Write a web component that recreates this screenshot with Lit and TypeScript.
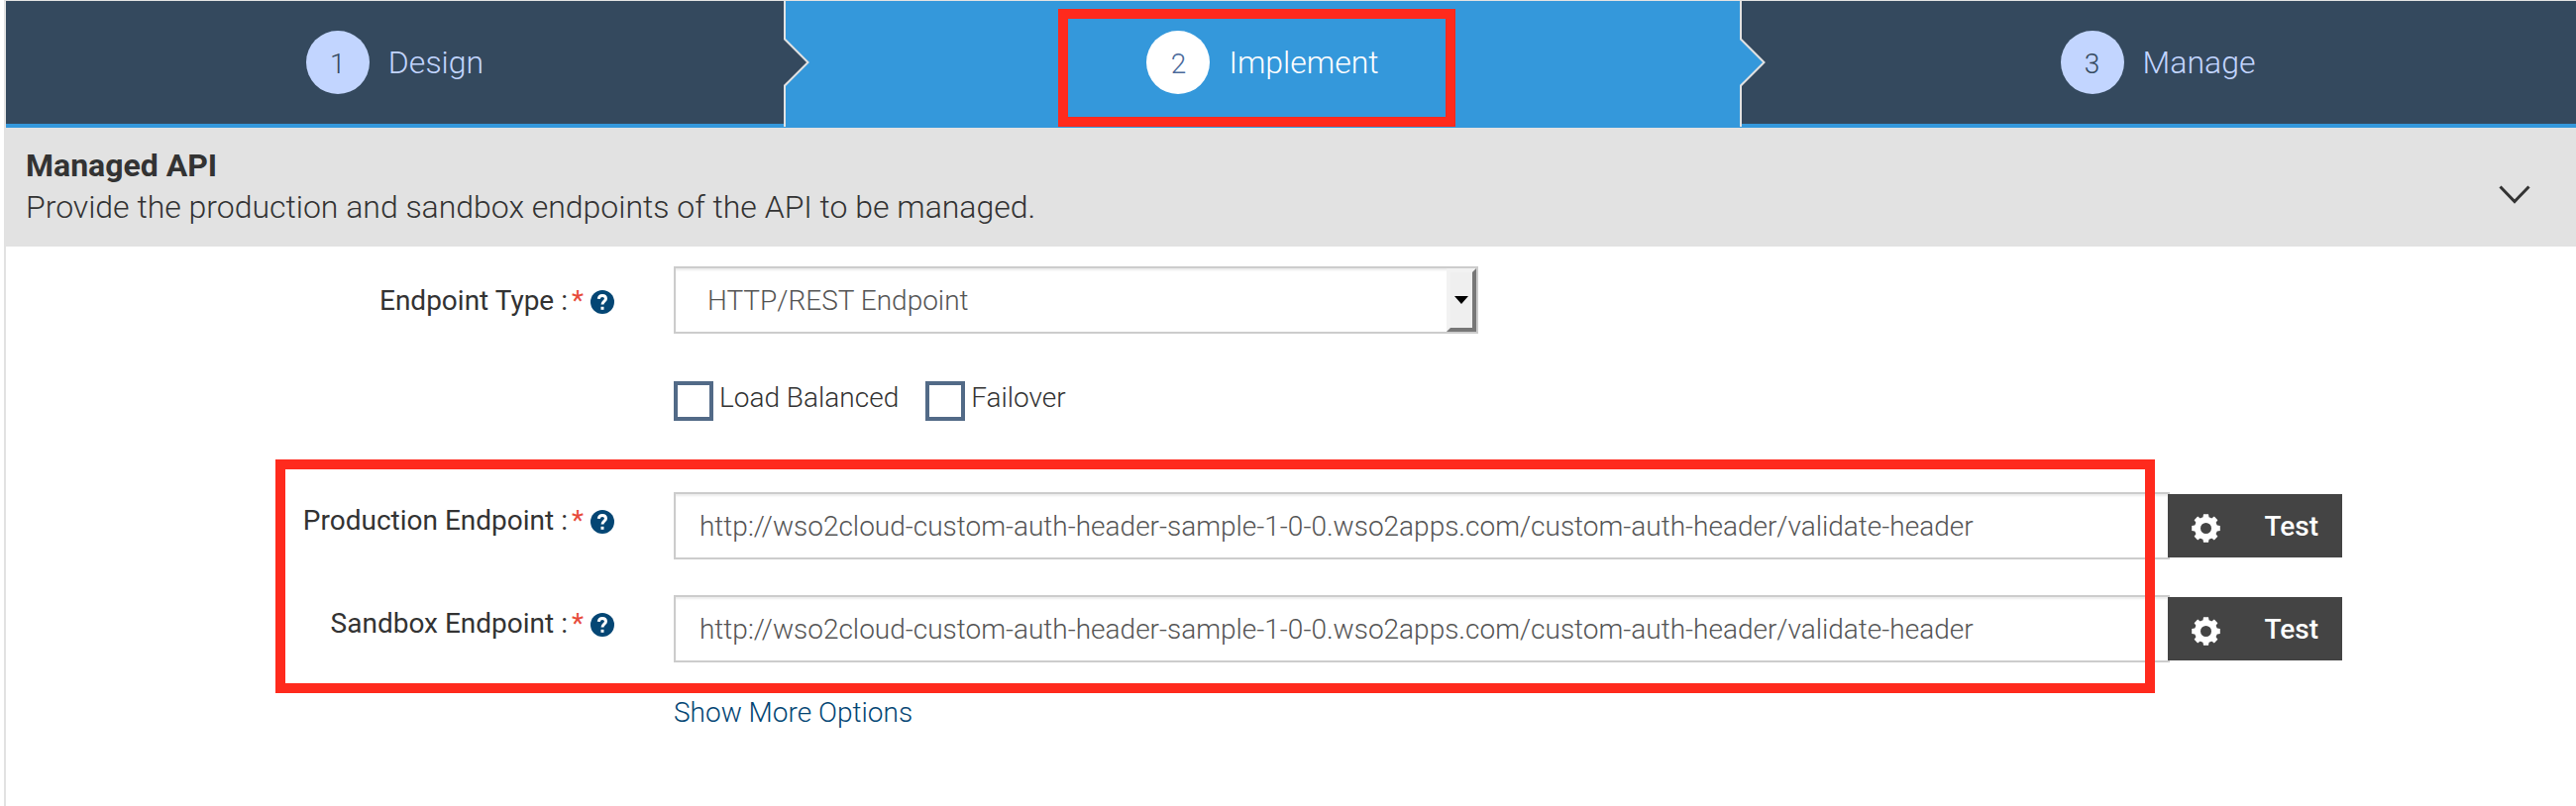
import { LitElement, html, css, svg } from "lit";
import { customElement, property } from "lit/decorators.js";
import { classMap } from "lit/directives/class-map.js";

const ENDPOINT =
  "http://wso2cloud-custom-auth-header-sample-1-0-0.wso2apps.com/custom-auth-header/validate-header";

const TEETH = [0, 45, 90, 135, 180, 225, 270, 315];

@customElement("wizard-step")
class WizardStep extends LitElement {
  @property() number = "";
  @property() label = "";
  @property({ type: Boolean }) active = false;
  @property({ type: Boolean }) last = false;

  static styles = css`
    :host { display: block; position: relative; }
    .step {
      box-sizing: border-box; height: 128px;
      display: flex; align-items: center; justify-content: center;
      background: #34495e; border-bottom: 4px solid #3498db;
      color: #c2d5ff; font: 300 32px/37px Roboto, sans-serif;
    }
    .step.active { background: #3498db; color: #fff; }
    .circle {
      width: 64px; height: 64px; border-radius: 50%; background: #c2d5ff;
      color: #34495e; font-size: 28px; line-height: 67px; text-align: center;
    }
    .label { margin: 0 2px 0 19px; }
    .active .circle { background: #fff; color: #4b6a9b; }
    .arrow { position: absolute; top: 0; right: -25px; width: 28px; height: 128px; z-index: 1; }
  `;

  render() {
    const fill = this.active ? "#3498db" : "#34495e";
    return html`
      <div class=${classMap({ step: true, active: this.active })}>
        <span class="circle">${this.number}</span><span class="label">${this.label}</span>
      </div>
      ${this.last
        ? null
        : html`<svg class="arrow" viewBox="0 0 28 128">
            <path d="M0 38H2L26 62L2 86H0Z" fill=${fill} />
            <path d="M2 0V38.500L25.500 62L2 85.500V127" fill="none" stroke="#e2e2e2" stroke-width="2" />
          </svg>`}
    `;
  }
}

@customElement("field-label")
class FieldLabel extends LitElement {
  @property() text = "";

  static styles = css`
    :host {
      display: flex; align-items: center; justify-content: flex-end;
      color: #333; font: 400 28px/40px Roboto, sans-serif; white-space: pre;
    }
    .text, .star { padding-top: 2px; }
    .star { color: #e74c3c; margin-left: 4px; }
    .help { width: 24px; height: 24px; margin-left: 7px; margin-top: 4px; }
  `;

  render() {
    return html`<span class="text">${this.text} :</span><span class="star">*</span>
      <svg class="help" viewBox="0 0 24 24">
        <circle cx="12" cy="12" r="12" fill="#044674" />
        <path d="M8.300 8.800C8.500 6.500 10 5.500 12 5.500C14.200 5.500 15.500 6.800 15.500 8.700C15.500 11.200 12 11.300 12 14.600" fill="none" stroke="#fff" stroke-width="3" />
        <rect x="10.500" y="16.800" width="3" height="3" fill="#fff" />
      </svg>`;
  }
}

@customElement("test-button")
class TestButton extends LitElement {
  static styles = css`
    :host { display: block; position: relative; }
    .button {
      box-sizing: border-box; width: 176px; height: 64px; padding: 0 24px;
      display: flex; align-items: center; justify-content: space-between;
      border: 0; background: #444; color: #fff; font: 500 28px/32px Roboto, sans-serif;
    }
    .caption { padding-top: 2px; }
    .gear { width: 29px; height: 29px; margin-top: 4px; }
  `;

  render() {
    return html`<button class="button">
      <svg class="gear" viewBox="-14.500 -14.500 29 29">
        <circle r="8.500" fill="none" stroke="#fff" stroke-width="6" />
        ${TEETH.map(
          (a) => svg`<path d="M-3.200 -10L-2.500 -14.300H2.500L3.200 -10Z" fill="#fff" transform="rotate(${a})" />`
        )}
      </svg>
      <span class="caption">Test</span>
    </button>`;
  }
}

@customElement("app-root")
class AppRoot extends LitElement {
  static styles = css`
    :host {
      display: block; position: relative; box-sizing: border-box; width: 2600px; height: 814px;
      overflow: hidden; background: #fff; font-family: Roboto, sans-serif; color: #333;
      padding-left: 4px;
    }
    .page { border-left: 2px solid #e2e2e2; border-top: 1px solid #e2e2e2; height: 813px; }
    .steps { display: grid; grid-template-columns: 787px 965px 1fr; }
    .heading {
      box-sizing: border-box; height: 120px; padding: 19px 46px 0 20px; background: #e2e2e2;
      display: flex; justify-content: space-between;
    }
    .title { margin: 0; font-size: 32px; line-height: 38px; font-weight: 700; }
    .desc { margin: 0; font-size: 32px; line-height: 47px; font-weight: 300; letter-spacing: -0.02px; }
    .chevron { width: 32px; height: 20px; margin-top: 39px; }
    .form { padding-top: 20px; display: grid; grid-template-columns: 614px 1fr; column-gap: 60px; }
    field-label { height: 40px; }
    .l1 { margin-top: 14px; }
    .l2 { margin-top: 8px; }
    .control {
      box-sizing: border-box; height: 68px; border: 2px solid #ccc; background: #fff; color: #555;
      box-shadow: inset 0 2px 2px rgba(0, 0, 0, 0.075);
      font: 300 28px/66px Roboto, sans-serif; display: flex;
    }
    .select { width: 812px; padding-left: 32px; justify-content: space-between; }
    .drop {
      box-sizing: border-box; width: 30px; height: 64px; background: #efefef;
      border: 4px solid; border-color: #f2f2f2 #777 #777 #f2f2f2;
      display: flex; align-items: center; justify-content: center;
    }
    .tri { width: 14px; height: 8px; }
    .checks {
      grid-column: 2; display: flex; height: 40px; margin-top: 48px; margin-bottom: 72px;
      font-weight: 300; font-size: 28px; line-height: 33px;
    }
    .check { display: flex; gap: 6px; margin-right: 27px; }
    .box { box-sizing: border-box; width: 40px; height: 40px; border: 4px solid #526a87; background: #fff; }
    .line { display: flex; align-items: center; height: 68px; margin-bottom: 36px; }
    .input { width: 1510px; padding-left: 24px; letter-spacing: -0.01px; }
    test-button { margin-left: -2px; }
    .more {
      grid-column: 2; margin-top: -5px; color: #044674; font-weight: 300; font-size: 28px;
      line-height: 40px; text-decoration: none;
    }
    .mark { position: absolute; box-sizing: border-box; border: 10px solid #ff2a1d; z-index: 3; }
    .mark-step { left: 1068px; top: 9px; width: 401px; height: 119px; }
    .mark-fields { left: 278px; top: 464px; width: 1897px; height: 236px; }
  `;

  render() {
    return html`
      <div class="page">
        <nav class="steps">
          <wizard-step number="1" label="Design"></wizard-step>
          <wizard-step number="2" label="Implement" active></wizard-step>
          <wizard-step number="3" label="Manage" last></wizard-step>
        </nav>
        <header class="heading">
          <div>
            <h2 class="title">Managed API</h2>
            <p class="desc">Provide the production and sandbox endpoints of the API to be managed.</p>
          </div>
          <svg class="chevron" viewBox="0 0 32 20">
            <path d="M1.500 1.500L16 16.500L30.500 1.500" fill="none" stroke="#333" stroke-width="3" />
          </svg>
        </header>
        <section class="form">
          <field-label class="l1" text="Endpoint Type"></field-label>
          <div class="control select">
            <span>HTTP/REST Endpoint</span>
            <div class="drop"><svg class="tri" viewBox="0 0 14 8"><path d="M0 0H14L7 8Z" /></svg></div>
          </div>
          <div class="checks">
            <label class="check"><i class="box"></i><span>Load Balanced</span></label>
            <label class="check"><i class="box"></i><span>Failover</span></label>
          </div>
          ${["Production Endpoint", "Sandbox Endpoint"].map(
            (name) => html`
              <field-label class="l2" text=${name}></field-label>
              <div class="line">
                <div class="control input"><span>${ENDPOINT}</span></div>
                <test-button></test-button>
              </div>
            `
          )}
          <a class="more">Show More Options</a>
        </section>
      </div>
      <div class="mark mark-step"></div>
      <div class="mark mark-fields"></div>
    `;
  }
}
